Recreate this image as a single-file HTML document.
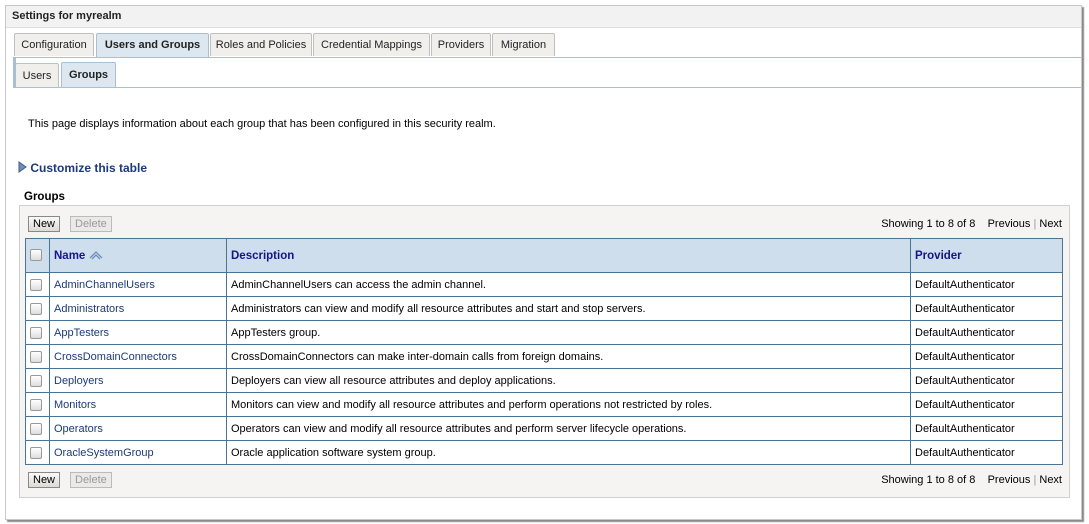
<!DOCTYPE html>
<html><head><style>
body{margin:0;width:1089px;height:524px;background:#fff;font-family:"Liberation Sans",sans-serif;font-size:11px;color:#000;position:relative;overflow:hidden}
.frame{position:absolute;left:5px;top:5px;width:1075px;height:513px;border:1px solid #c8c8c8;box-shadow:2px 2px 1px #8a8a8a;background:#fff}
.title{position:absolute;left:0;top:0;right:0;height:21px;background:#f2f2f2;border-bottom:1px solid #ddd;font-weight:bold;font-size:11px;line-height:20px;padding-left:6px;color:#222}
.tabs{position:absolute;left:0;top:27px;}
.tab{position:absolute;top:0;height:22px;border:1px solid #c0c0c0;border-bottom:none;background:#f0efec;line-height:22px;text-align:center;font-size:11px;color:#222;border-radius:2px 2px 0 0;white-space:nowrap;overflow:hidden}
.tab.a{background:#dce7f0;font-weight:bold;border-color:#a9c0d2;height:23px}
.line1{position:absolute;left:7px;right:0;top:51px;border-top:1px solid #a9c0d2}
.sub{position:absolute;left:7px;top:52px;width:3px;height:30px;background:#a9c0d2}
.line2{position:absolute;left:7px;right:0;top:81px;border-top:1px solid #a9c0d2}
.desc{position:absolute;left:22px;top:112px}
.cust{position:absolute;left:12px;top:155px;font-weight:bold;color:#1a3a7a;font-size:12px}
.gh{position:absolute;left:18px;top:185px;font-weight:bold;font-size:11.5px}
.panel{position:absolute;left:13px;top:199px;width:1049px;height:291px;background:#f5f4f2;border:1px solid #d0d0d0}
.btn{position:absolute;height:14px;border:1px solid #888;background:linear-gradient(#fafafa,#dcdad5);font-size:11px;line-height:14px;padding:0 4px}
.btn.d{color:#999;border-color:#bbb;background:#eceae6}
.show{position:absolute;right:7px;font-size:11px}
table{position:absolute;left:5px;top:32px;border-collapse:collapse;width:1038px;background:#fff}
td,th{border:1px solid #4b7394;height:23px;padding:0 4px;text-align:left;font-size:11px;white-space:nowrap}
th{background:#cfdeec;height:33px;color:#15158a;font-size:11.5px}
td.n{color:#1a3a7a}
.cb{display:inline-block;width:10px;height:10px;border:1px solid #999;border-radius:2px;background:linear-gradient(#fff,#ddd);vertical-align:middle}
</style></head><body>
<div class="frame">
<div class="title">Settings for myrealm</div>
<div class="tabs">
<div class="tab" style="left:8px;width:78px">Configuration</div>
<div class="tab a" style="left:90px;width:111px">Users and Groups</div>
<div class="tab" style="left:204px;width:100px">Roles and Policies</div>
<div class="tab" style="left:307px;width:115px">Credential Mappings</div>
<div class="tab" style="left:425px;width:58px">Providers</div>
<div class="tab" style="left:486px;width:61px">Migration</div>
</div>
<div class="line1"></div>
<div class="tab" style="left:9px;top:57px;width:42px;height:24px;line-height:24px">Users</div>
<div class="tab a" style="left:55px;top:56px;width:53px;height:25px;line-height:25px">Groups</div>
<div class="sub"></div>
<div class="line2"></div>
<div class="desc">This page displays information about each group that has been configured in this security realm.</div>
<div class="cust"><svg width="9" height="12" style="vertical-align:-1px"><path d="M1 1L8 6L1 11Z" fill="#6f8fb8" stroke="#3d5f8a"/></svg> Customize this table</div>
<div class="gh">Groups</div>
<div class="panel">
<div class="btn" style="left:8px;top:10px">New</div>
<div class="btn d" style="left:50px;top:10px">Delete</div>
<div class="show" style="top:12px">Showing 1 to 8 of 8 &nbsp;&nbsp; Previous <span style="color:#999">|</span> Next</div>
<table>
<tr><th style="width:15px"><span class="cb"></span></th><th style="width:168px">Name <svg width="14" height="10" style="vertical-align:-1px"><path d="M1 8L7 2L13 8M3 9L7 5L11 9" fill="none" stroke="#6f8fb8" stroke-width="1.3"/></svg></th><th>Description</th><th style="width:143px">Provider</th></tr>
<tr><td><span class="cb"></span></td><td class="n">AdminChannelUsers</td><td>AdminChannelUsers can access the admin channel.</td><td>DefaultAuthenticator</td></tr>
<tr><td><span class="cb"></span></td><td class="n">Administrators</td><td>Administrators can view and modify all resource attributes and start and stop servers.</td><td>DefaultAuthenticator</td></tr>
<tr><td><span class="cb"></span></td><td class="n">AppTesters</td><td>AppTesters group.</td><td>DefaultAuthenticator</td></tr>
<tr><td><span class="cb"></span></td><td class="n">CrossDomainConnectors</td><td>CrossDomainConnectors can make inter-domain calls from foreign domains.</td><td>DefaultAuthenticator</td></tr>
<tr><td><span class="cb"></span></td><td class="n">Deployers</td><td>Deployers can view all resource attributes and deploy applications.</td><td>DefaultAuthenticator</td></tr>
<tr><td><span class="cb"></span></td><td class="n">Monitors</td><td>Monitors can view and modify all resource attributes and perform operations not restricted by roles.</td><td>DefaultAuthenticator</td></tr>
<tr><td><span class="cb"></span></td><td class="n">Operators</td><td>Operators can view and modify all resource attributes and perform server lifecycle operations.</td><td>DefaultAuthenticator</td></tr>
<tr><td><span class="cb"></span></td><td class="n">OracleSystemGroup</td><td>Oracle application software system group.</td><td>DefaultAuthenticator</td></tr>
</table>
<div class="btn" style="left:8px;top:266px">New</div>
<div class="btn d" style="left:50px;top:266px">Delete</div>
<div class="show" style="top:268px">Showing 1 to 8 of 8 &nbsp;&nbsp; Previous <span style="color:#999">|</span> Next</div>
</div>
</div>
</body></html>
